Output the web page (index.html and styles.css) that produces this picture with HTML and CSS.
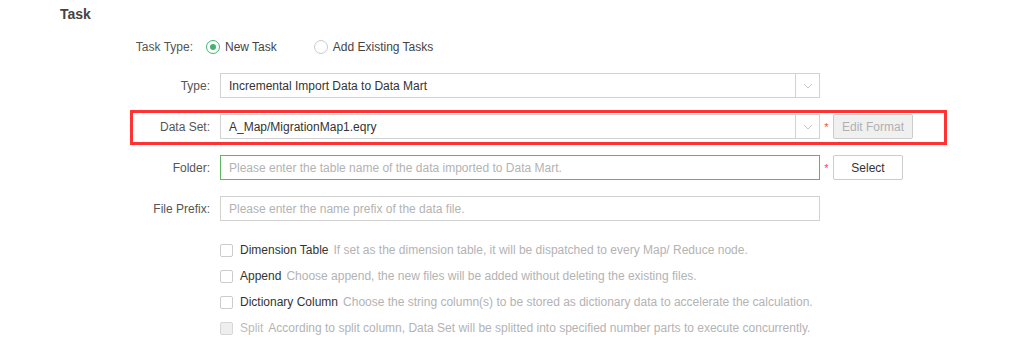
FILE: index.html
```html
<!DOCTYPE html>
<html>
<head>
  <meta charset="utf-8">
  <link rel="stylesheet" href="styles.css">
</head>
<body>
  <div class="task-panel">
    <div class="task-title">Task</div>

    <div class="form-row task-type-row">
      <div class="form-label">Task Type:</div>
      <div class="radio-group">
        <label class="radio checked"><span class="radio-dot"></span>New Task</label>
        <label class="radio"><span class="radio-dot"></span>Add Existing Tasks</label>
      </div>
    </div>

    <div class="form-row">
      <div class="form-label">Type:</div>
      <div class="select-box">
        <span class="select-text">Incremental Import Data to Data Mart</span>
        <span class="select-arrow"><svg width="10" height="6" viewBox="0 0 10 6"><path d="M1 1 L5 5 L9 1" fill="none" stroke="#c4c4c4" stroke-width="1"/></svg></span>
      </div>
    </div>

    <div class="form-row marked">
      <div class="form-label">Data Set:</div>
      <div class="select-box">
        <span class="select-text">A_Map/MigrationMap1.eqry</span>
        <span class="select-arrow"><svg width="10" height="6" viewBox="0 0 10 6"><path d="M1 1 L5 5 L9 1" fill="none" stroke="#c4c4c4" stroke-width="1"/></svg></span>
      </div>
      <span class="required">*</span>
      <button class="btn btn-disabled">Edit Format</button>
    </div>

    <div class="form-row">
      <div class="form-label">Folder:</div>
      <div class="text-box focused">Please enter the table name of the data imported to Data Mart.</div>
      <span class="required">*</span>
      <button class="btn btn-select">Select</button>
    </div>

    <div class="form-row">
      <div class="form-label">File Prefix:</div>
      <div class="text-box">Please enter the name prefix of the data file.</div>
    </div>

    <ul class="option-list">
      <li class="option"><span class="check"></span><span class="option-name">Dimension Table</span><span class="option-desc">If set as the dimension table, it will be dispatched to every Map/ Reduce node.</span></li>
      <li class="option"><span class="check"></span><span class="option-name">Append</span><span class="option-desc">Choose append, the new files will be added without deleting the existing files.</span></li>
      <li class="option"><span class="check"></span><span class="option-name">Dictionary Column</span><span class="option-desc">Choose the string column(s) to be stored as dictionary data to accelerate the calculation.</span></li>
      <li class="option disabled"><span class="check"></span><span class="option-name">Split</span><span class="option-desc">According to split column, Data Set will be splitted into specified number parts to execute concurrently.</span></li>
    </ul>
  </div>
</body>
</html>
```

FILE: styles.css
```css
/* Общие стили */
body {
  margin: 0;
  background-color: #fff;
  font-family: "Liberation Sans", Arial, sans-serif;
  font-size: 12px;
  color: #333;
}

.task-panel {
  width: 1022px;
  height: 342px;
  overflow: hidden;
}

.task-title {
  padding: 6px 0 0 60px;
  height: 31px;
  line-height: 16px;
  font-size: 14px;
  font-weight: bold;
  color: #444;
}

/* Строки формы */
.form-row {
  position: relative;
  display: flex;
  align-items: center;
  height: 25px;
  margin-bottom: 16px;
}

.form-label {
  width: 210px;
  margin-right: 10px;
  text-align: right;
  color: #555;
}

.task-type-row {
  height: 20px;
  margin-bottom: 16px;
}

.task-type-row .form-label {
  width: 193px;
  margin-right: 13px;
}

.radio-group {
  display: flex;
  align-items: center;
}

.radio {
  display: flex;
  align-items: center;
  margin-right: 37px;
  color: #444;
}

.radio-dot {
  position: relative;
  box-sizing: border-box;
  width: 14px;
  height: 14px;
  margin-right: 5px;
  border: 1px solid #ccc;
  border-radius: 50%;
}

.radio.checked .radio-dot {
  border-color: #3fb46e;
}

.radio.checked .radio-dot::after {
  content: "";
  position: absolute;
  left: 3px;
  top: 3px;
  width: 6px;
  height: 6px;
  border-radius: 50%;
  background-color: #3fb46e;
}

/* Выпадающие списки и поля */
.select-box,
.text-box {
  box-sizing: border-box;
  display: flex;
  align-items: center;
  width: 600px;
  height: 25px;
  border: 1px solid #d2d2d2;
  background-color: #fff;
}

.select-text {
  flex: 1;
  padding-left: 8px;
  color: #333;
}

.select-arrow {
  display: flex;
  align-items: center;
  justify-content: center;
  width: 23px;
  height: 100%;
  border-left: 1px solid #d2d2d2;
}

.text-box {
  padding-left: 8px;
  color: #b3b3b3;
}

.text-box.focused {
  border-color: #5cb85c;
}

.required {
  width: 13px;
  text-align: center;
  color: #f44;
  font-size: 11px;
  line-height: 10px;
  align-self: center;
}

.btn {
  box-sizing: border-box;
  height: 25px;
  padding: 0;
  border: 1px solid #ccc;
  border-radius: 2px;
  font-family: inherit;
  font-size: 12px;
}

.btn-disabled {
  width: 80px;
  background-color: #f0f0f0;
  color: #b0b0b0;
}

.btn-select {
  width: 70px;
  background-color: #fff;
  color: #333;
}

/* Красная рамка вокруг строки Data Set */
.marked::after {
  content: "";
  position: absolute;
  left: 130px;
  right: 75px;
  top: -4px;
  bottom: -6px;
  border: 3px solid #f33;
  pointer-events: none;
}

/* Флажки */
.option-list {
  margin: 12px 0 0 0;
  padding: 0 0 0 220px;
  list-style: none;
}

.option {
  display: flex;
  align-items: center;
  height: 26px;
  white-space: nowrap;
}

.check {
  box-sizing: border-box;
  width: 13px;
  height: 13px;
  margin-right: 7px;
  border: 1px solid #ccc;
  border-radius: 2px;
  background-color: #fff;
}

.option-name {
  margin-right: 5px;
  color: #333;
}

.option-desc {
  color: #b3b3b3;
}

.option.disabled .check {
  background-color: #eee;
  border-color: #d6d6d6;
}

.option.disabled .option-name {
  color: #bbb;
}
```
